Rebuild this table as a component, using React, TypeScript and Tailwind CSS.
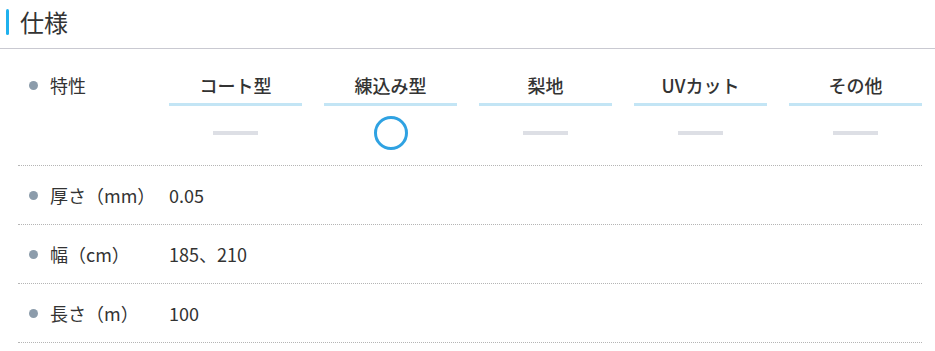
const features = [
  { name: "コート型", on: false },
  { name: "練込み型", on: true },
  { name: "梨地", on: false },
  { name: "UVカット", on: false },
  { name: "その他", on: false },
];

const specs = [
  { label: "厚さ（mm）", value: "0.05" },
  { label: "幅（cm）", value: "185、210" },
  { label: "長さ（m）", value: "100" },
];

const Label = ({ text }: { text: string }) => (
  <div className="flex w-[151px] shrink-0 items-center pl-[11px]">
    <span className="h-[9px] w-[9px] rounded-full bg-[#8c9cab]" />
    <span className="ml-3 text-lg leading-6">{text}</span>
  </div>
);

export default function App() {
  return (
    <div
      className="w-[935px] bg-white text-[#333]"
      style={{ fontFamily: '"Noto Sans CJK JP", "Noto Sans", sans-serif' }}
    >
      <div className="flex items-center border-b border-[#c9c9d1] pl-[6px] pt-[9px] pb-[13px]">
        <span className="h-[26px] w-[3px] rounded-sm bg-[#1fb1ee]" />
        <h2 className="ml-[11px] text-2xl leading-[26px]">仕様</h2>
      </div>

      <div className="ml-[18px] mr-[13px]">
        {/* 特性 row */}
        <div className="flex border-b border-dotted border-[#b5b5b5] pt-6 pb-[15px]">
          <div className="flex h-6 items-center">
            <Label text="特性" />
          </div>
          <div className="flex gap-[22px]">
            {features.map((f) => (
              <div key={f.name} className="flex w-[133px] flex-col items-center">
                <div className="w-full border-b-[3px] border-[#c3e5f5] pb-[6px] text-center text-lg font-medium leading-6">
                  {f.name}
                </div>
                <div className="mt-[10px] flex h-[34px] items-center justify-center">
                  {f.on ? (
                    <span className="h-[34px] w-[34px] rounded-full border-[3.5px] border-[#2fa2e2]" />
                  ) : (
                    <span className="h-1 w-[45px] bg-[#dddfe5]" />
                  )}
                </div>
              </div>
            ))}
          </div>
        </div>

        {specs.map((s) => (
          <div
            key={s.label}
            className="flex h-[59px] items-center border-b border-dotted border-[#b5b5b5]"
          >
            <Label text={s.label} />
            <span className="text-lg leading-6">{s.value}</span>
          </div>
        ))}
      </div>
    </div>
  );
}
